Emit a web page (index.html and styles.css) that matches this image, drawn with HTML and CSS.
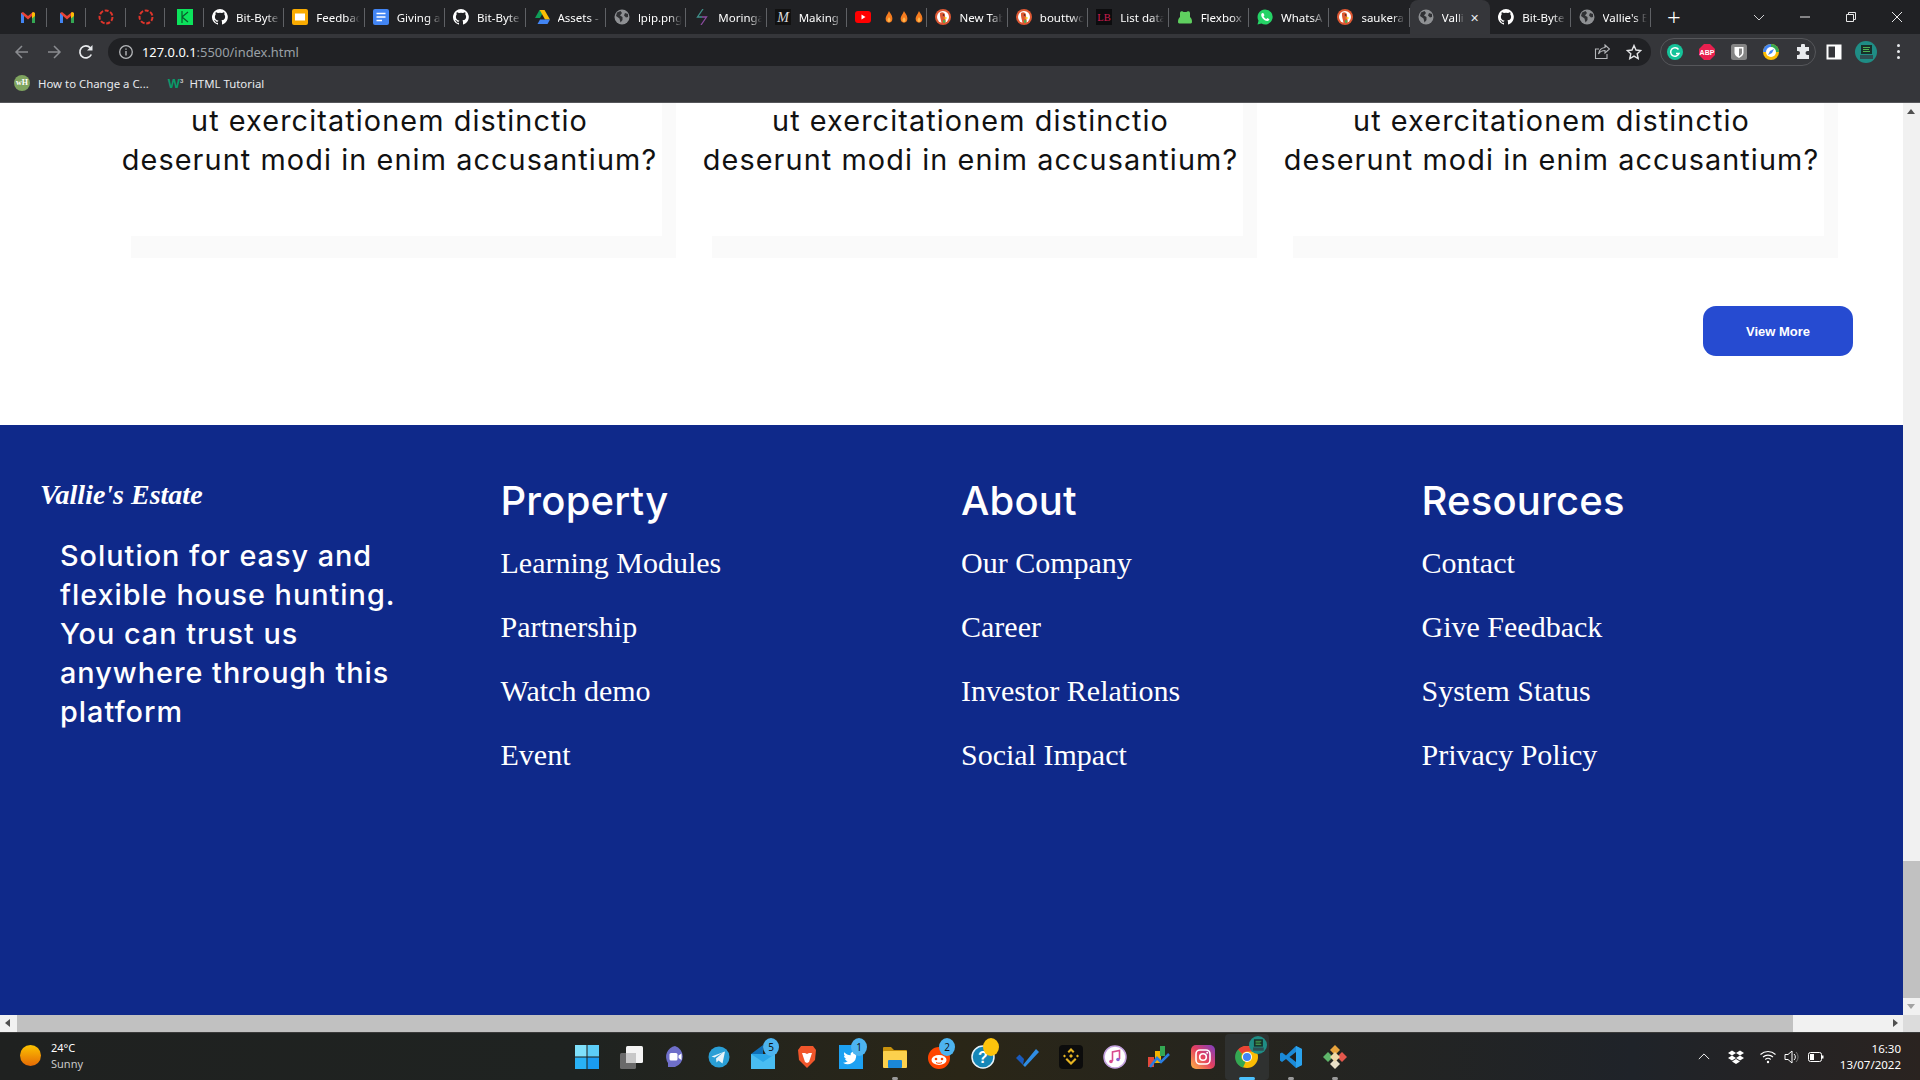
FILE: index.html
```html
<!DOCTYPE html>
<html lang="en">
<head>
    <meta charset="UTF-8">
    <title>Vallie's Estate</title>
    <link rel="stylesheet" href="styles.css">
</head>
<body>
<svg class="sprite" width="0" height="0">
    <symbol id="gmail" viewBox="0 0 16 16"><path d="M1 14V4l2 -1 5 4 5-4 2 1v10h-3V7L8 10.500 4 7v7z" fill="#ea4335"/><path d="M1 14V4l3 3v7z" fill="#4285f4"/><path d="M15 14V4l-3 3v7z" fill="#34a853"/><path d="M13 3l2 1v3l-3 2.500V4z" fill="#fbbc04"/></symbol>
    <symbol id="ring" viewBox="0 0 16 16"><circle cx="8" cy="8" r="6.500" fill="none" stroke="#e0352b" stroke-width="2" stroke-dasharray="4 1.700"/></symbol>
    <symbol id="green" viewBox="0 0 16 16"><rect width="16" height="16" fill="#0ce35c"/><path d="M5 2v12M5 8l6-5M5 8l6 5" stroke="#0a5a2c" stroke-width="1.200" fill="none"/></symbol>
    <symbol id="gh" viewBox="0 0 16 16"><path fill="#fff" d="M8 0a8 8 0 0 0-2.500 15.600c.4.100.5-.2.500-.4v-1.400c-2.200.5-2.700-1-2.700-1-.4-.9-.9-1.200-.9-1.200-.7-.5.100-.5.100-.5.800.100 1.200.8 1.200.8.700 1.200 1.900.9 2.300.7.100-.5.300-.9.500-1.100-1.800-.2-3.600-.9-3.600-4 0-.9.300-1.600.8-2.100-.1-.2-.4-1 .1-2.100 0 0 .7-.2 2.200.8a7.600 7.600 0 0 1 4 0c1.500-1 2.200-.8 2.200-.8.400 1.100.2 1.900.1 2.100.5.600.8 1.300.8 2.100 0 3.100-1.900 3.700-3.700 3.900.3.300.6.800.6 1.500v2.200c0 .2.100.5.600.4A8 8 0 0 0 8 0z"/></symbol>
    <symbol id="slides" viewBox="0 0 16 16"><rect y="0" width="16" height="16" rx="2" fill="#f9ab00"/><rect x="3" y="4.500" width="10" height="7" fill="#fff"/></symbol>
    <symbol id="docs" viewBox="0 0 16 16"><rect width="16" height="16" rx="2" fill="#4285f4"/><path d="M3.500 4.500h9M3.500 8h9M3.500 11.500h5.500" stroke="#fff" stroke-width="1.500"/></symbol>
    <symbol id="drive" viewBox="0 0 16 16"><path d="M5.500 1h5L6 9H1z" fill="#0f9d58"/><path d="M10.500 1 16 10.500h-5L5.700 1z" fill="#fbbc04"/><path d="M3.500 15 6 10.500h10L13.500 15z" fill="#4285f4"/></symbol>
    <symbol id="globe" viewBox="0 0 16 16"><circle cx="8" cy="8" r="7.500" fill="#8e9093"/><path d="M3 3.500l3.500-1.500 1.500 2-2 2.500 2.500 1.500v3l-2 2.500-1-4L2 7zM11 4l3 1v3l-2 .5-2-2z" fill="#303134"/></symbol>
    <symbol id="bolt" viewBox="0 0 16 16"><path d="M9 0 3.500 8H8" fill="none" stroke="#3f8f8a" stroke-width="1.300"/><path d="M8 8h4.500L7 16" fill="none" stroke="#8a4a9e" stroke-width="1.300"/></symbol>
    <symbol id="yt" viewBox="0 0 16 16"><rect y="2" width="16" height="12" rx="3" fill="#f00"/><path d="M6.500 5.500v5L10.500 8z" fill="#fff"/></symbol>
    <symbol id="fire" viewBox="0 0 16 16"><path d="M8 0c1 3 4.500 5 4.500 10A4.500 5.500 0 0 1 3.500 10C3.500 7 6 5 8 0z" fill="#f57c1f"/><path d="M8 8c.5 1.500 2 2 2 4a2 2.500 0 0 1-4 0c0-1.500 1.500-2.500 2-4z" fill="#ffb74d"/></symbol>
    <symbol id="ddg" viewBox="0 0 16 16"><circle cx="8" cy="8" r="8" fill="#de5833"/><circle cx="8" cy="8" r="6" fill="#fff"/><path d="M5 4c2-1.500 5-.5 5 2 0 2 1 5 .5 8H6.500C6 11 4.500 7 5 4z" fill="#de5833"/><circle cx="8.500" cy="6" r=".8" fill="#222"/><path d="M8 9l3.500-1v2z" fill="#fdd20a"/><path d="M8 11l2.500.5-.5 2.500-2-.5z" fill="#4caf50"/></symbol>
    <symbol id="frog" viewBox="0 0 16 16"><path d="M1 13c0-3 1-4 2-5V4a2 2 0 0 1 3.500-1h3A2 2 0 0 1 13 4v4c1 1 2 2 2 5 0 1-1 1.500-2 1.500H3c-1 0-2-.5-2-1.500z" fill="#5fcf5f"/></symbol>
    <symbol id="wa" viewBox="0 0 16 16"><path d="M8 .5A7.500 7.500 0 0 0 1.500 11.700L.5 15.500l3.900-1A7.500 7.500 0 1 0 8 .5z" fill="#25d366"/><path d="M5.500 4c-.5 0-1.300.8-1.300 2 0 2.500 3.300 6 6 6 1.500 0 2.200-1 2.200-1.700l-2-1.300-1 1c-1 0-2.500-1.500-2.800-2.700l.9-1L6.500 4.200z" fill="#fff"/></symbol>
    <symbol id="back" viewBox="0 0 16 16"><path d="M14 8H2.500M8 2 2 8l6 6" fill="none" stroke="currentColor" stroke-width="1.500"/></symbol>
    <symbol id="forward" viewBox="0 0 16 16"><path d="M2 8h11.500M8 2l6 6-6 6" fill="none" stroke="currentColor" stroke-width="1.500"/></symbol>
    <symbol id="reload" viewBox="0 0 16 16"><path d="M13.300 10.500A6 6 0 1 1 12.300 3.800" fill="none" stroke="currentColor" stroke-width="1.700"/><path d="M14.500 1v5.500H9z" fill="currentColor"/></symbol>
    <symbol id="info" viewBox="0 0 16 16"><circle cx="8" cy="8" r="6.300" fill="none" stroke="currentColor" stroke-width="1.300"/><path d="M8 7v4.500M8 4.500v1.300" stroke="currentColor" stroke-width="1.400"/></symbol>
    <symbol id="share" viewBox="0 0 16 16"><path d="M11 1l4.500 4-4.500 4V6.500C8 6.500 6 7.500 4.500 10 5 6.500 7 4 11 3.500z M13 10v4.500H1.500V5H5" fill="none" stroke="#b5b7ba" stroke-width="1.100"/></symbol>
    <symbol id="star" viewBox="0 0 16 16"><path d="M8 1.500l2 4.500 4.800.5-3.600 3.200 1 4.800L8 12.100l-4.200 2.400 1-4.800L1.200 6.500 6 6z" fill="none" stroke="#e3e4e6" stroke-width="1.400"/></symbol>
    <symbol id="gram" viewBox="0 0 16 16"><circle cx="8" cy="8" r="8" fill="#15c39a"/><path d="M11.500 5.500A4.300 4.300 0 1 0 12 9.500H9" fill="none" stroke="#fff" stroke-width="1.500"/></symbol>
    <symbol id="shield" viewBox="0 0 16 16"><rect width="16" height="16" rx="2.500" fill="#858585"/><path d="M3.500 3h9v6c0 2-2.500 4-4.500 5-2-1-4.500-3-4.500-5z" fill="#fff"/><path d="M8 4.500h3v4.500c0 1-1.500 2.500-3 3.300z" fill="#858585"/></symbol>
    <symbol id="compass" viewBox="0 0 16 16"><circle cx="8" cy="8" r="8" fill="#fbbc04"/><path d="M8 0a8 8 0 0 1 8 8H8z" fill="#34a853"/><path d="M0 8a8 8 0 0 1 8-8v8z" fill="#4285f4"/><circle cx="8" cy="8" r="5" fill="#fff"/><path d="M11 5 9 9 5 11 7 7z" fill="#4285f4"/></symbol>
    <symbol id="puzzle" viewBox="0 0 16 16"><path d="M6 1.500a2 2 0 0 1 4 0V3h4v4h-1.500a2 2 0 0 0 0 4H14v4H2v-4h1a2 2 0 0 0 0-4H2V3h4z" fill="#e8eaed"/></symbol>
    <symbol id="panel" viewBox="0 0 16 16"><rect x="1.500" y="1.500" width="13" height="13" fill="none" stroke="#fff" stroke-width="2"/><rect x="9" y="1.500" width="5.500" height="13" fill="#fff"/></symbol>
    <symbol id="avatar" viewBox="0 0 22 22"><circle cx="11" cy="11" r="11" fill="#1f8d85"/><rect x="6" y="4" width="11" height="9" fill="#17302a"/><path d="M8 6.500h7M8 8.500h6M8 10.500h7" stroke="#5ed35e" stroke-width=".8"/><path d="M5 14h13v4H5z" fill="#2e4e52"/></symbol>
    <symbol id="win" viewBox="0 0 23 23"><rect width="11" height="11" fill="#7fe0fb"/><rect x="12" width="11" height="11" fill="#5ccdf7"/><rect y="12" width="11" height="11" fill="#29b1f5"/><rect x="12" y="12" width="11" height="11" fill="#1a9cf2"/></symbol>
    <symbol id="taskview" viewBox="0 0 24 24"><rect x="1" y="8" width="16" height="16" rx="1.500" fill="#6a6a6a"/><rect x="7" y="1" width="17" height="17" rx="1.500" fill="#f4f4f4"/><rect x="7" y="8" width="10" height="10" fill="#c8c8c8"/></symbol>
    <symbol id="meet" viewBox="0 0 24 24"><path d="M12 1a11 11 0 0 1 0 21H5v-4A11 11 0 0 1 12 1z" fill="#6f6fc9"/><rect x="6.500" y="8" width="8" height="7.500" rx="1.500" fill="#fff"/><path d="M15.500 10.500l3-2v6.500l-3-2z" fill="#fff"/></symbol>
    <symbol id="tg" viewBox="0 0 24 24"><circle cx="12" cy="12" r="10.500" fill="#2a9fd6"/><path d="M4.500 11.500 18 6.500l-2.500 12-4-3-2 2-.5-4 7-6-8.500 5z" fill="#e8f4fa"/></symbol>
    <symbol id="mail" viewBox="0 0 24 24"><path d="M0 9 12 0v9z" fill="#0e6fb8"/><rect y="9" width="24" height="15" fill="#2ba6e8"/><path d="M0 9l12 8 12-8v15H0z" fill="#49bdf2"/></symbol>
    <symbol id="brave" viewBox="0 0 24 24"><path d="M6 1h12l3 4-1 10-8 8-8-8L3 5z" fill="#f1562b"/><path d="M7 8h3l2 1 2-1h3l-2 6-1 3-2 1-2-1-1-3z" fill="#fff"/></symbol>
    <symbol id="twitter" viewBox="0 0 24 24"><rect width="24" height="24" fill="#1da1f2"/><path d="M19 8c-.6.300-1.100.4-1.700.5.600-.4 1.100-.9 1.300-1.600-.6.300-1.200.6-1.900.7a3 3 0 0 0-5.100 2.700c-2.500-.1-4.700-1.300-6.200-3.100-.8 1.400-.4 3.100 1 4-.5 0-1-.2-1.400-.4 0 1.500 1 2.700 2.400 3-.4.100-.9.100-1.400.1.400 1.200 1.500 2 2.800 2.100A6 6 0 0 1 4 17.700 8.500 8.500 0 0 0 17.200 10c.7-.5 1.300-1.200 1.800-2z" fill="#fff"/></symbol>
    <symbol id="folder" viewBox="0 0 24 24"><path d="M0 3a1 1 0 0 1 1-1h7l3 3h12a1 1 0 0 1 1 1v3H0z" fill="#c9920c"/><rect y="6" width="24" height="17" rx="1" fill="#fcd14d"/><rect x="5" y="15" width="14" height="8" rx="1" fill="#1b88d8"/></symbol>
    <symbol id="reddit" viewBox="0 0 24 24"><circle cx="12" cy="13" r="11" fill="#ff4500"/><ellipse cx="12" cy="15" rx="7.500" ry="5" fill="#fff"/><circle cx="9" cy="14" r="1.300" fill="#ff4500"/><circle cx="15" cy="14" r="1.300" fill="#ff4500"/><path d="M9 17.500c2 1 4 1 6 0" stroke="#ff4500" fill="none"/></symbol>
    <symbol id="check" viewBox="0 0 24 24"><path d="M1 13l3.500-3.500L9 14 8 20z" fill="#195abd"/><path d="M8 20 21 4l3 3L10 22z" fill="#2f8de4"/></symbol>
    <symbol id="bnb" viewBox="0 0 24 24"><rect width="24" height="24" rx="4" fill="#0c0c0c"/><path d="M12 3l3.500 3.500-1.500 1.500-2-2-2 2-1.500-1.500zM5.500 9.500 7 11l-1.500 1.500L4 11zM18.500 9.500 20 11l-1.500 1.500L17 11zM12 9l2 2-2 2-2-2zM8 13l4 4 4-4 1.500 1.500L12 20l-5.500-5.500z" fill="#e6b422"/></symbol>
    <symbol id="music" viewBox="0 0 24 24"><circle cx="12" cy="12" r="11" fill="#fff" stroke="#c4a2e0" stroke-width="1.500"/><path d="M9.500 16V7l7-1.500V14" fill="none" stroke="#d84a8e" stroke-width="1.600"/><circle cx="8" cy="16.500" r="1.800" fill="#d84a8e"/><circle cx="15" cy="14.500" r="1.800" fill="#8a63d2"/></symbol>
    <symbol id="chart" viewBox="0 0 24 24"><rect x="1" y="12" width="6" height="10" fill="#e4483a"/><rect x="8" y="6" width="6" height="12" fill="#f4b400"/><rect x="13" y="1" width="5" height="10" fill="#34a853"/><path d="M3 22 10 13l4 4 8-8" fill="none" stroke="#2a7de1" stroke-width="2.500"/></symbol>
    <symbol id="insta" viewBox="0 0 24 24"><defs><linearGradient id="ig" x1="0" y1="1" x2="1" y2="0"><stop offset="0" stop-color="#fdb545"/><stop offset=".5" stop-color="#e4405f"/><stop offset="1" stop-color="#7b3fc4"/></linearGradient></defs><rect width="24" height="24" rx="5" fill="url(#ig)"/><rect x="5" y="5" width="14" height="14" rx="4" fill="none" stroke="#fff" stroke-width="1.600"/><circle cx="12" cy="12" r="3.300" fill="none" stroke="#fff" stroke-width="1.600"/><circle cx="16.200" cy="7.800" r="1" fill="#fff"/></symbol>
    <symbol id="chrome" viewBox="0 0 24 24"><circle cx="12" cy="12" r="11" fill="#fbbc04"/><path d="M12 1a11 11 0 0 1 9.500 5.500H12A5.500 5.500 0 0 0 7 9L3 4.500A11 11 0 0 1 12 1z" fill="#ea4335"/><path d="M3 4.500 7 9a5.500 5.500 0 0 0 3.500 8L8 22.500A11 11 0 0 1 3 4.500z" fill="#34a853"/><circle cx="12" cy="12" r="5" fill="#fff"/><circle cx="12" cy="12" r="4" fill="#4285f4"/></symbol>
    <symbol id="vscode" viewBox="0 0 24 24"><path d="M17 1l6 3v16l-6 3-10-9-4 3-2-1.500v-7L3 7.500l4 3z" fill="#1b8ad8"/><path d="M17 7 10.500 12l6.500 5z" fill="#1f2120"/><path d="M17 1l6 3v16l-6 3z" fill="#2aa3ee"/></symbol>
    <symbol id="git" viewBox="0 0 24 24"><path d="M12 0l5 5-5 5-5-5z" fill="#e8a33d"/><path d="M5 7l5 5-5 5-5-5z" fill="#5eb56a"/><path d="M19 7l5 5-5 5-5-5z" fill="#e4574c"/><path d="M12 14l5 5-5 5-5-5z" fill="#e9e0c8"/><path d="M12 7l5 5-5 5-5-5z" fill="#f0d9a8"/></symbol>
    <symbol id="dropbox" viewBox="0 0 16 16"><path d="M4 1.500 8 4 4 6.500 0 4zM12 1.500 16 4l-4 2.500L8 4zM4 6.500 8 9l-4 2.500L0 9zM12 6.500 16 9l-4 2.500L8 9zM8 10l4 2.500-4 2.500-4-2.500z" fill="#fff"/></symbol>
    <symbol id="wifi" viewBox="0 0 16 16"><path d="M.5 5.500a11 11 0 0 1 15 0M3 8a7.500 7.500 0 0 1 10 0M5.300 10.500a4 4 0 0 1 5.400 0" fill="none" stroke="#fff" stroke-width="1.100"/><circle cx="8" cy="13" r="1.200" fill="#fff"/></symbol>
    <symbol id="volume" viewBox="0 0 16 16"><path d="M1 5.500h3L8 2v12L4 10.500H1z" fill="none" stroke="#fff" stroke-width="1"/><path d="M10 5a4 4 0 0 1 0 6" fill="none" stroke="#fff"/><path d="M12 3a7 7 0 0 1 0 10" fill="none" stroke="#777"/></symbol>
    <symbol id="battery" viewBox="0 0 16 16"><rect x=".5" y="3.500" width="13" height="9" rx="2" fill="none" stroke="#fff"/><rect x="2" y="5" width="4" height="6" fill="#fff"/><rect x="14" y="6.500" width="1.500" height="3" fill="#fff"/></symbol>
</svg>

<header class="chrome">
    <div class="tabstrip">
        <div class="tab pinned"><svg class="fav"><use href="#gmail"/></svg></div>
        <div class="tab pinned"><svg class="fav"><use href="#gmail"/></svg></div>
        <div class="tab pinned"><svg class="fav"><use href="#ring"/></svg></div>
        <div class="tab pinned"><svg class="fav"><use href="#ring"/></svg></div>
        <div class="tab pinned"><svg class="fav"><use href="#green"/></svg></div>
        <div class="tab"><svg class="fav"><use href="#gh"/></svg><span class="title">Bit-Byte</span></div>
        <div class="tab"><svg class="fav"><use href="#slides"/></svg><span class="title">Feedback</span></div>
        <div class="tab"><svg class="fav"><use href="#docs"/></svg><span class="title">Giving a</span></div>
        <div class="tab"><svg class="fav"><use href="#gh"/></svg><span class="title">Bit-Byte</span></div>
        <div class="tab"><svg class="fav"><use href="#drive"/></svg><span class="title">Assets -</span></div>
        <div class="tab"><svg class="fav"><use href="#globe"/></svg><span class="title">lpip.png</span></div>
        <div class="tab"><svg class="fav"><use href="#bolt"/></svg><span class="title">Moringa</span></div>
        <div class="tab"><svg class="fav" viewBox="0 0 16 16"><rect width="16" height="16" fill="#111"/><text x="8" y="13" font-family="Liberation Serif" font-style="italic" font-size="14" fill="#ddd" text-anchor="middle">M</text></svg><span class="title">Making</span></div>
        <div class="tab"><svg class="fav"><use href="#yt"/></svg><span class="flames"><svg class="flame"><use href="#fire"/></svg><svg class="flame"><use href="#fire"/></svg><svg class="flame"><use href="#fire"/></svg></span></div>
        <div class="tab"><svg class="fav"><use href="#ddg"/></svg><span class="title">New Tab</span></div>
        <div class="tab"><svg class="fav"><use href="#ddg"/></svg><span class="title">bouttwo</span></div>
        <div class="tab"><svg class="fav" viewBox="0 0 16 16"><rect width="16" height="16" fill="#0c0c0e"/><text x="8" y="12" font-family="Liberation Serif" font-size="10.500" fill="#d01c50" text-anchor="middle">LB</text></svg><span class="title">List data</span></div>
        <div class="tab"><svg class="fav"><use href="#frog"/></svg><span class="title">Flexbox</span></div>
        <div class="tab"><svg class="fav"><use href="#wa"/></svg><span class="title">WhatsA</span></div>
        <div class="tab"><svg class="fav"><use href="#ddg"/></svg><span class="title">saukera</span></div>
        <div class="tab active"><svg class="fav"><use href="#globe"/></svg><span class="title">Valli</span><span class="tab-close">&#10005;</span></div>
        <div class="tab"><svg class="fav"><use href="#gh"/></svg><span class="title">Bit-Byte</span></div>
        <div class="tab"><svg class="fav"><use href="#globe"/></svg><span class="title">Vallie's E</span></div>
        <div class="new-tab">+</div>
        <div class="win-buttons">
            <svg class="win-btn" viewBox="0 0 12 12"><path d="M1 4l5 5 5-5" fill="none" stroke="#d0d1d3"/></svg>
            <svg class="win-btn" viewBox="0 0 12 12"><path d="M1 6h10" stroke="#e8e8e8"/></svg>
            <svg class="win-btn" viewBox="0 0 12 12"><path d="M1.500 3.500h7v7h-7zM3.500 3.500v-2h7v7h-2" fill="none" stroke="#e8e8e8"/></svg>
            <svg class="win-btn" viewBox="0 0 12 12"><path d="M1 1l10 10M11 1 1 11" stroke="#e8e8e8"/></svg>
        </div>
    </div>
    <div class="toolbar">
        <svg class="nav dim"><use href="#back"/></svg>
        <svg class="nav dim"><use href="#forward"/></svg>
        <svg class="nav"><use href="#reload"/></svg>
        <div class="omnibox">
            <svg class="info"><use href="#info"/></svg>
            <span class="url"><b>127.0.0.1</b>:5500/index.html</span>
            <svg class="omni-ico"><use href="#share"/></svg>
            <svg class="omni-ico"><use href="#star"/></svg>
        </div>
        <div class="extensions">
            <svg class="ext"><use href="#gram"/></svg>
            <svg class="ext" viewBox="0 0 16 16"><path d="M5 0h6l5 5v6l-5 5H5l-5-5V5z" fill="#e9204f"/><text x="8" y="10.800" font-family="Liberation Sans" font-size="7" font-weight="700" fill="#fff" text-anchor="middle">ABP</text></svg>
            <svg class="ext"><use href="#shield"/></svg>
            <svg class="ext"><use href="#compass"/></svg>
            <svg class="ext"><use href="#puzzle"/></svg>
        </div>
        <svg class="panel"><use href="#panel"/></svg>
        <svg class="avatar"><use href="#avatar"/></svg>
        <span class="dots"><i></i><i></i><i></i></span>
    </div>
    <div class="bookmarks">
        <span class="bm-round">wH</span>
        <span class="bm-text">How to Change a C...</span>
        <span class="bm-w3">W<sup>3</sup></span>
        <span class="bm-text">HTML Tutorial</span>
    </div>
</header>

<div class="viewport">
    <main class="page">
        <section class="cards">
            <article class="card"><p>ut exercitationem distinctio<br>deserunt modi in enim accusantium?</p></article>
            <article class="card"><p>ut exercitationem distinctio<br>deserunt modi in enim accusantium?</p></article>
            <article class="card"><p>ut exercitationem distinctio<br>deserunt modi in enim accusantium?</p></article>
        </section>
        <div class="more">
            <a class="more-btn">View More</a>
        </div>
        <footer class="footer">
            <div class="brand">
                <h2 class="logo">Vallie's Estate</h2>
                <p class="tagline">Solution for easy and flexible house hunting. You can trust us anywhere through this platform</p>
            </div>
            <div class="links">
                <h3>Property</h3>
                <a>Learning Modules</a>
                <a>Partnership</a>
                <a>Watch demo</a>
                <a>Event</a>
            </div>
            <div class="links">
                <h3>About</h3>
                <a>Our Company</a>
                <a>Career</a>
                <a>Investor Relations</a>
                <a>Social Impact</a>
            </div>
            <div class="links">
                <h3>Resources</h3>
                <a>Contact</a>
                <a>Give Feedback</a>
                <a>System Status</a>
                <a>Privacy Policy</a>
            </div>
        </footer>
    </main>
    <div class="vbar">
        <span class="arrow up"></span>
        <span class="vthumb"></span>
        <span class="arrow down"></span>
    </div>
</div>
<div class="hbar">
    <span class="arrow left"></span>
    <span class="hthumb"></span>
    <span class="arrow right"></span>
    <span class="corner"></span>
</div>

<div class="taskbar">
    <div class="weather">
        <span class="sun"></span>
        <div class="weather-text"><div>24°C</div><div class="sunny">Sunny</div></div>
    </div>
    <div class="apps">
        <div class="app"><svg class="app-ico"><use href="#win"/></svg></div>
        <div class="app"><svg class="app-ico"><use href="#taskview"/></svg></div>
        <div class="app"><svg class="app-ico"><use href="#meet"/></svg></div>
        <div class="app"><svg class="app-ico"><use href="#tg"/></svg></div>
        <div class="app"><svg class="app-ico"><use href="#mail"/></svg><span class="badge">5</span></div>
        <div class="app"><svg class="app-ico"><use href="#brave"/></svg></div>
        <div class="app"><svg class="app-ico"><use href="#twitter"/></svg><span class="badge">1</span></div>
        <div class="app"><svg class="app-ico"><use href="#folder"/></svg><span class="run-dot"></span></div>
        <div class="app"><svg class="app-ico"><use href="#reddit"/></svg><span class="badge">2</span></div>
        <div class="app"><svg class="app-ico" viewBox="0 0 24 24"><circle cx="12" cy="12" r="11" fill="#1587b8" stroke="#e8f4fa" stroke-width="1.500"/><text x="12" y="18" font-family="Liberation Sans" font-size="16" font-weight="700" fill="#fff" text-anchor="middle">?</text></svg><span class="badge yellow"></span></div>
        <div class="app"><svg class="app-ico"><use href="#check"/></svg></div>
        <div class="app"><svg class="app-ico"><use href="#bnb"/></svg></div>
        <div class="app"><svg class="app-ico"><use href="#music"/></svg></div>
        <div class="app"><svg class="app-ico"><use href="#chart"/></svg></div>
        <div class="app"><svg class="app-ico"><use href="#insta"/></svg></div>
        <div class="app current"><svg class="app-ico"><use href="#chrome"/></svg><svg class="app-avatar"><use href="#avatar"/></svg><span class="run-bar"></span></div>
        <div class="app"><svg class="app-ico"><use href="#vscode"/></svg><span class="run-dot"></span></div>
        <div class="app"><svg class="app-ico"><use href="#git"/></svg><span class="run-dot"></span></div>
    </div>
    <div class="tray">
        <svg class="tray-chevron" viewBox="0 0 14 8"><path d="M1 7l6-6 6 6" fill="none" stroke="#fff" stroke-width="1.100"/></svg>
        <svg class="tray-ico dropbox"><use href="#dropbox"/></svg>
        <svg class="tray-ico wifi"><use href="#wifi"/></svg>
        <svg class="tray-ico"><use href="#volume"/></svg>
        <svg class="tray-ico"><use href="#battery"/></svg>
        <div class="clock"><div>16:30</div><div>13/07/2022</div></div>
    </div>
</div>
</body>
</html>
```

FILE: styles.css
```css
* {
    margin: 0;
    padding: 0;
    box-sizing: border-box;
}
body {
    width: 1920px;
    height: 1080px;
    overflow: hidden;
    display: flex;
    flex-direction: column;
    background-color: #fff;
    font-family: "Noto Sans", sans-serif;
}
.sprite {
    position: absolute;
}

/* browser chrome */
.chrome {
    flex: none;
    height: 103px;
    background-color: #35363a;
    border-bottom: 1px solid #55565a;
    color: #fff;
}
.tabstrip {
    display: flex;
    align-items: center;
    height: 34px;
    padding-left: 8px;
    background-color: #202124;
}
.tab {
    position: relative;
    flex: none;
    display: flex;
    align-items: center;
    gap: 8px;
    width: 80.4px;
    height: 34px;
    padding-left: 8px;
    font-size: 11.5px;
    white-space: nowrap;
}
.tab::after {
    content: "";
    position: absolute;
    right: 0;
    top: 8px;
    height: 19px;
    width: 1px;
    background-color: #5f6165;
}
.pinned {
    width: 39.2px;
    padding-left: 12px;
}
.active {
    background-color: #35363a;
    border-radius: 8px 8px 0 0;
}
.active::after {
    display: none;
}
.fav {
    flex: none;
    width: 16px;
    height: 16px;
}
.title {
    width: 44px;
    overflow: hidden;
    -webkit-mask-image: linear-gradient(90deg, #000 70%, transparent 100%);
    mask-image: linear-gradient(90deg, #000 70%, transparent 100%);
}
.active .title {
    width: 22px;
}
.tab-close {
    font-size: 11px;
    margin-left: -2px;
    color: #e8eaed;
}
.flames {
    display: flex;
    gap: 3px;
    width: 48px;
    margin-left: 4px;
    overflow: hidden;
}
.flame {
    flex: none;
    width: 12px;
    height: 14px;
}
.new-tab {
    margin-left: 16px;
    font-size: 24px;
    font-weight: 300;
    line-height: 34px;
}
.win-buttons {
    display: flex;
    margin-left: 72px;
    gap: 34px;
}
.win-btn {
    width: 12px;
    height: 12px;
}
.toolbar {
    display: flex;
    align-items: center;
    height: 32px;
    padding-top: 3px;
}
.nav {
    flex: none;
    width: 16px;
    height: 16px;
    margin-left: 16px;
    color: #e8eaed;
}
.nav:first-child {
    margin-left: 14px;
}
.dim {
    color: #8a8c90;
}
.omnibox {
    flex: none;
    display: flex;
    align-items: center;
    width: 1543px;
    height: 28px;
    margin-left: 14px;
    padding: 0 9px 0 10px;
    border-radius: 14px;
    background-color: #202124;
}
.info {
    flex: none;
    width: 16px;
    height: 16px;
    color: #b5b7ba;
}
.url {
    flex: 1;
    margin-left: 8px;
    font-size: 12.9px;
    color: #9aa0a6;
}
.url b {
    font-weight: 400;
    color: #fff;
}
.omni-ico {
    flex: none;
    width: 16px;
    height: 16px;
    margin-left: 16px;
}
.extensions {
    flex: none;
    display: flex;
    align-items: center;
    gap: 16px;
    width: 156px;
    height: 28px;
    margin-left: 9px;
    padding-left: 6px;
    border: 1px solid #55565a;
    border-radius: 14px;
}
.ext {
    flex: none;
    width: 16px;
    height: 16px;
}
.panel {
    flex: none;
    width: 16px;
    height: 16px;
    margin-left: 10px;
}
.avatar {
    flex: none;
    width: 22px;
    height: 22px;
    margin-left: 13px;
}
.dots {
    display: flex;
    flex-direction: column;
    gap: 3px;
    margin-left: 20px;
}
.dots i {
    width: 3px;
    height: 3px;
    border-radius: 50%;
    background-color: #e8eaed;
}
.bookmarks {
    display: flex;
    align-items: center;
    height: 36px;
    padding-left: 14px;
    padding-bottom: 2px;
    font-size: 11.4px;
}
.bm-round {
    width: 16px;
    height: 16px;
    margin-right: 8px;
    border-radius: 50%;
    background-color: #7fa45f;
    font-family: "Liberation Serif", serif;
    font-size: 8px;
    font-weight: 700;
    line-height: 16px;
    text-align: center;
}
.bm-w3 {
    margin-left: 19px;
    margin-right: 6px;
    color: #0a9a6a;
    font-family: "Liberation Sans", sans-serif;
    font-size: 13px;
    font-weight: 700;
    line-height: 16px;
}
.bm-w3 sup {
    font-size: 6px;
    color: #ccc;
}
.bm-text {
    color: #e8eaed;
}

/* page */
.viewport {
    flex: 1;
    display: flex;
    min-height: 0;
}
.page {
    flex: 1;
    display: flex;
    flex-direction: column;
    min-width: 0;
    overflow: hidden;
}
.cards {
    display: grid;
    grid-template-columns: repeat(3, 545px);
    gap: 36px;
    margin-top: -60px;
    padding-left: 117px;
}
.card {
    height: 193px;
    padding-top: 58px;
    box-shadow: 14px 22px 0 #fafafa;
    background-color: #fff;
    font-family: Inter, sans-serif;
    font-size: 28.8px;
    letter-spacing: 1.1px;
    line-height: 39px;
    text-align: center;
    color: #111;
    white-space: nowrap;
}
.more {
    display: flex;
    justify-content: flex-end;
    padding: 70px 50px 69px 0;
}
.more-btn {
    width: 150px;
    height: 50px;
    border-radius: 13px;
    background-color: #264bd1;
    color: #fff;
    font-family: "Liberation Sans", sans-serif;
    font-size: 13px;
    font-weight: 700;
    line-height: 51px;
    text-align: center;
}
.footer {
    flex: 1;
    display: grid;
    grid-template-columns: repeat(4, 1fr);
    padding: 51px 21px 0 40px;
    background-color: #0f298a;
    color: #fff;
}
.logo {
    font-family: "Liberation Serif", serif;
    font-size: 28px;
    font-style: italic;
    font-weight: 700;
    line-height: 38px;
}
.tagline {
    width: 360px;
    margin-top: 22px;
    padding-left: 20px;
    font-family: Inter, sans-serif;
    font-size: 28.8px;
    font-weight: 500;
    letter-spacing: 1px;
    line-height: 39px;
}
.links {
    display: flex;
    flex-direction: column;
    align-items: flex-start;
}
.links h3 {
    margin-top: 1px;
    margin-bottom: 15px;
    font-family: Inter, sans-serif;
    font-size: 40px;
    font-weight: 500;
    letter-spacing: .2px;
    line-height: 48px;
}
.links a {
    height: 64px;
    font-family: "Liberation Serif", serif;
    font-size: 30px;
    line-height: 46px;
}

/* scrollbars */
.vbar {
    flex: none;
    width: 17px;
    display: flex;
    flex-direction: column;
    background-color: #f1f1f1;
}
.vthumb {
    height: 137px;
    margin-top: auto;
    background-color: #c1c1c1;
}
.arrow {
    flex: none;
    position: relative;
    width: 17px;
    height: 17px;
}
.arrow::after {
    content: "";
    position: absolute;
    left: 4px;
    top: 5px;
    border: 4px solid transparent;
}
.up::after {
    top: 2px;
    border-bottom: 5px solid #505050;
}
.down::after {
    top: 6px;
    border-top: 5px solid #a3a3a3;
}
.left::after {
    left: 1px;
    top: 4px;
    border-right: 5px solid #505050;
}
.right::after {
    left: 7px;
    top: 4px;
    border-left: 5px solid #505050;
}
.hbar {
    flex: none;
    display: flex;
    height: 17px;
    background-color: #f1f1f1;
}
.hthumb {
    width: 1776px;
    background-color: #c1c1c1;
}
.right {
    margin-left: auto;
}
.corner {
    width: 17px;
    background-color: #dcdcdc;
}

/* windows taskbar */
.taskbar {
    flex: none;
    display: grid;
    grid-template-columns: 1fr auto 1fr;
    align-items: center;
    height: 48px;
    background: linear-gradient(90deg, #1f2120 0%, #1f2321 30%, #2a2617 50%, #1f2329 85%, #2a2320 100%);
    border-top: 1px solid #3a3a3a;
    color: #fff;
}
.weather {
    display: flex;
    align-items: center;
    padding-left: 20px;
    padding-bottom: 2px;
    font-size: 11px;
    line-height: 16px;
}
.sun {
    width: 21px;
    height: 21px;
    margin-right: 10px;
    border-radius: 50%;
    background: linear-gradient(#fdc400, #e56a05);
}
.sunny {
    color: #c9c9c9;
}
.apps {
    display: flex;
    margin-left: 2px;
}
.app {
    position: relative;
    display: flex;
    align-items: center;
    justify-content: center;
    width: 44px;
    height: 46px;
}
.current {
    background-color: #2f3130;
    border-radius: 4px;
}
.app-ico {
    width: 24px;
    height: 24px;
}
.app-avatar {
    position: absolute;
    right: 2px;
    top: 2px;
    width: 18px;
    height: 18px;
}
.badge {
    position: absolute;
    right: 6px;
    top: 4px;
    width: 16px;
    height: 18px;
    border-radius: 50%;
    background-color: #4db4f0;
    color: #111;
    font-size: 10px;
    line-height: 18px;
    text-align: center;
}
.yellow {
    background-color: #fdc40c;
}
.run-dot {
    position: absolute;
    left: 19px;
    bottom: 0;
    width: 6px;
    height: 3px;
    border-radius: 2px;
    background-color: #9a9a9a;
}
.run-bar {
    position: absolute;
    left: 14px;
    bottom: 0;
    width: 16px;
    height: 3px;
    border-radius: 2px;
    background-color: #4cc2ff;
}
.tray {
    display: flex;
    align-items: center;
    justify-content: flex-end;
    padding-right: 19px;
}
.tray-chevron {
    width: 12px;
    height: 7px;
    margin-right: 18px;
}
.tray-ico {
    width: 16px;
    height: 16px;
    margin-right: 8px;
}
.dropbox {
    margin-right: 16px;
}
.clock {
    margin-left: 8px;
    font-size: 11.5px;
    line-height: 16px;
    text-align: right;
}
```
